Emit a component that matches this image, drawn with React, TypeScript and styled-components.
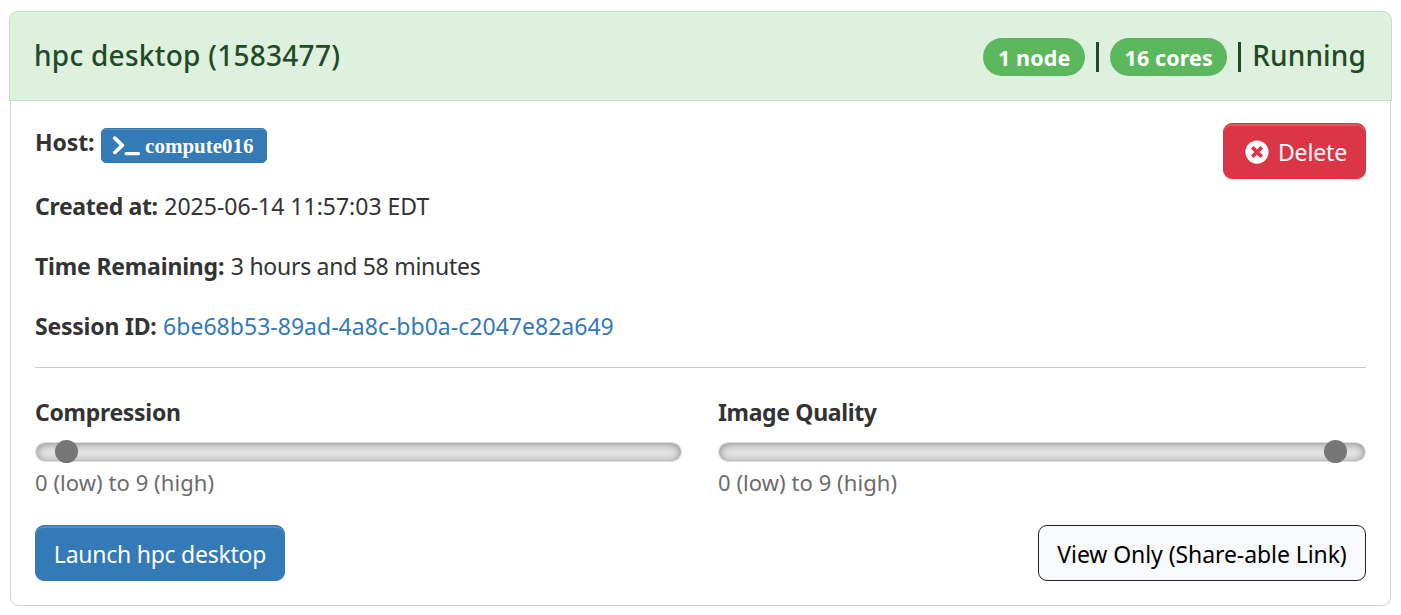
import React from 'react';
import styled, { createGlobalStyle } from 'styled-components';
import { FaTimesCircle } from 'react-icons/fa';

const GlobalStyle = createGlobalStyle`
  * { box-sizing: border-box; }
  body {
    margin: 0;
    background: #fff;
    color: #333;
    font-family: "Segoe UI", "Noto Sans", "Open Sans", sans-serif;
    font-size: 23px;
    line-height: 36px;
  }
`;

const Card = styled.section`
  width: 1381px;
  height: 595px;
  margin: 11px 0 0 10px;
  border: 1px solid #d0d2d3;
  border-radius: 9px;
`;

const Header = styled.header`
  display: flex;
  justify-content: space-between;
  align-items: center;
  height: 90px;
  margin: -1px -2px 0;
  padding: 0 25px 2px 24px;
  color: #234a26;
  background: #def0de;
  border: 1px solid #bfe3bf;
  border-radius: 9px 9px 0 0;
  font-size: 28px;
  font-weight: 500;
`;

const Status = styled.div`
  display: flex;
  align-items: center;
`;

const Pill = styled.span<{ $width: number }>`
  display: flex;
  justify-content: center;
  width: ${(p) => p.$width}px;
  height: 38px;
  margin-top: 3px;
  padding-top: 2px;
  border-radius: 19px;
  background: #5cb85c;
  color: #fff;
  font-size: 21.5px;
  font-weight: 700;
`;

const Divider = styled.span`
  width: 3px;
  height: 30px;
  margin: 4px 11px 0;
  background: #234a26;
`;

const Text = styled.span<{ $track?: number }>`
  letter-spacing: ${(p) => p.$track ?? 0}px;
  white-space: nowrap;
`;

const Label = styled(Text)`
  font-weight: 700;
`;

const Body = styled.div`
  padding: 22px 24px 0;
`;

const Top = styled.div`
  display: flex;
  justify-content: space-between;
  align-items: flex-start;
  height: 245px;
  border-bottom: 1px solid #cbcbcb;
`;

const Details = styled.div`
  display: flex;
  flex-direction: column;
  gap: 24px;
  padding-top: 1px;
`;

const Row = styled.div<{ $tall?: boolean }>`
  display: flex;
  gap: 6.6px;
  height: ${(p) => (p.$tall ? 40 : 36)}px;
`;

const Link = styled(Text)`
  color: #337ab7;
`;

const HostButton = styled.button`
  display: flex;
  align-items: center;
  gap: 5px;
  width: 166px;
  height: 35px;
  margin-top: 4px;
  padding: 1px 0 0 10px;
  border: 1px solid #337ab7;
  border-radius: 5px;
  background: #337ab7;
  box-shadow: inset 0 1px 0 rgba(255, 255, 255, 0.15);
  color: #fff;
  font: 700 21px/30px "Liberation Serif", serif;
`;

const Button = styled.button<{ $kind: 'danger' | 'primary' | 'light'; $width: number }>`
  display: flex;
  align-items: center;
  justify-content: center;
  gap: 10px;
  width: ${(p) => p.$width}px;
  height: 56px;
  padding: 1px 0 0;
  border: 1px solid ${(p) => ({ danger: '#dc3545', primary: '#337ab7', light: '#212529' })[p.$kind]};
  border-radius: 9px;
  background: ${(p) => ({ danger: '#dc3545', primary: '#337ab7', light: '#f8f9fa' })[p.$kind]};
  box-shadow: ${(p) => (p.$kind === 'light' ? 'none' : 'inset 0 2px 0 rgba(255, 255, 255, 0.15)')};
  color: ${(p) => (p.$kind === 'light' ? '#000' : '#fff')};
  font: inherit;
`;

const DeleteButton = styled(Button)`
  gap: 9px;
  padding-left: 3px;
`;

const Sliders = styled.div`
  display: grid;
  grid-template-columns: 647px 648px;
  gap: 36px;
  padding-top: 26px;
`;

const Field = styled.div`
  display: flex;
  flex-direction: column;
`;

const Track = styled.div<{ $offset: number }>`
  display: flex;
  align-items: center;
  height: 20px;
  margin: 12px 0 2px;
  padding: 0 0 1px ${(p) => p.$offset}px;
  border: 1px solid #dcdee2;
  border-radius: 10px;
  background: #e4e4e4;
  box-shadow: inset 0 1px 9px rgba(0, 0, 0, 0.4);
`;

const Thumb = styled.span`
  flex: none;
  width: 23px;
  height: 23px;
  border-radius: 50%;
  background: #767676;
`;

const Hint = styled(Text)`
  color: #6c6c6c;
  font-size: 22px;
`;

const Actions = styled.div`
  display: flex;
  justify-content: space-between;
  margin-top: 25px;
`;

const TerminalIcon = () => (
  <svg width="28" height="20" viewBox="0 0 28 20" fill="none" stroke="#fff" strokeLinecap="round">
    <path d="M2.8 2.1 L10.3 9.3 L2.8 16.5" strokeWidth="3.7" strokeLinejoin="round" />
    <path d="M14 17.6 H26.5" strokeWidth="3.2" />
  </svg>
);

export default function App() {
  return (
    <>
      <GlobalStyle />
      <Card>
        <Header>
          <Text $track={0.26}>hpc desktop (1583477)</Text>
          <Status>
            <Pill $width={102}><Text $track={0.1}>1 node</Text></Pill>
            <Divider />
            <Pill $width={117}><Text $track={0.1}>16 cores</Text></Pill>
            <Divider />
            <Text $track={0.14}>Running</Text>
          </Status>
        </Header>
        <Body>
          <Top>
            <Details>
              <Row $tall>
                <Label $track={-0.1}>Host:</Label>
                <HostButton><TerminalIcon /><Text>compute016</Text></HostButton>
              </Row>
              <Row><Label $track={-0.35}>Created at:</Label><Text>2025-06-14 11:57:03 EDT</Text></Row>
              <Row><Label $track={-0.18}>Time Remaining:</Label><Text $track={-0.28}>3 hours and 58 minutes</Text></Row>
              <Row><Label $track={-0.22}>Session ID:</Label><Link $track={0.02}>6be68b53-89ad-4a8c-bb0a-c2047e82a649</Link></Row>
            </Details>
            <DeleteButton $kind="danger" $width={143}><FaTimesCircle size={24} /><Text $track={-0.15}>Delete</Text></DeleteButton>
          </Top>
          <Sliders>
            <Field>
              <Label $track={-0.3}>Compression</Label>
              <Track $offset={18.5}><Thumb /></Track>
              <Hint $track={0.06}>0 (low) to 9 (high)</Hint>
            </Field>
            <Field>
              <Label $track={-0.35}>Image Quality</Label>
              <Track $offset={604.5}><Thumb /></Track>
              <Hint $track={0.06}>0 (low) to 9 (high)</Hint>
            </Field>
          </Sliders>
          <Actions>
            <Button $kind="primary" $width={250}><Text $track={-0.25}>Launch hpc desktop</Text></Button>
            <Button $kind="light" $width={328}><Text $track={-0.08}>View Only (Share-able Link)</Text></Button>
          </Actions>
        </Body>
      </Card>
    </>
  );
}
